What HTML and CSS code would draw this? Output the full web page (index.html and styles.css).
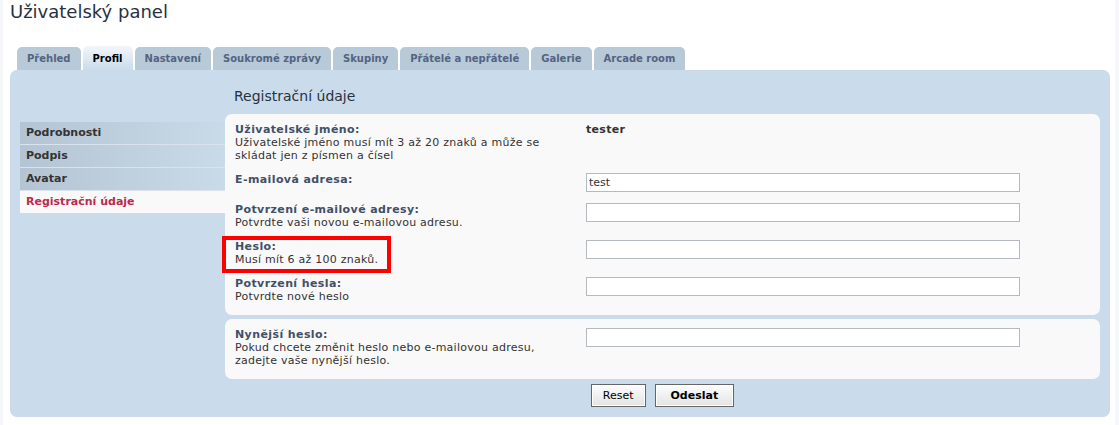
FILE: index.html
```html
<!DOCTYPE html>
<html>
  <head>
    <meta charset="utf-8">
    <title>Uživatelský panel</title>
    <link rel="stylesheet" href="styles.css">
  </head>
  <body>
    <div class="wrap">
      <h1 class="page-title">Uživatelský panel</h1>

      <ul class="tabs">
        <li><a href="#">Přehled</a></li>
        <li class="active"><a href="#">Profil</a></li>
        <li><a href="#">Nastavení</a></li>
        <li><a href="#">Soukromé zprávy</a></li>
        <li><a href="#">Skupiny</a></li>
        <li><a href="#">Přátelé a nepřátelé</a></li>
        <li><a href="#">Galerie</a></li>
        <li><a href="#">Arcade room</a></li>
      </ul>

      <div class="cp">
        <ul class="cp-menu">
          <li><a href="#">Podrobnosti</a></li>
          <li><a href="#">Podpis</a></li>
          <li><a href="#">Avatar</a></li>
          <li class="active"><a href="#">Registrační údaje</a></li>
        </ul>

        <div class="cp-main">
          <h2>Registrační údaje</h2>

          <div class="box">
            <dl class="row">
              <dt>
                <label>Uživatelské jméno:</label>
                <span class="explain">Uživatelské jméno musí mít 3 až 20 znaků a může se skládat jen z písmen a čísel</span>
              </dt>
              <dd><strong>tester</strong></dd>
            </dl>
            <dl class="row">
              <dt><label for="email">E-mailová adresa:</label></dt>
              <dd><input type="text" class="text" id="email" value="test"></dd>
            </dl>
            <dl class="row">
              <dt>
                <label for="email_confirm">Potvrzení e-mailové adresy:</label>
                <span class="explain">Potvrdte vaši novou e-mailovou adresu.</span>
              </dt>
              <dd><input type="text" class="text" id="email_confirm"></dd>
            </dl>
            <dl class="row">
              <dt>
                <label for="new_password">Heslo:</label>
                <span class="explain">Musí mít 6 až 100 znaků.</span>
                <span class="highlight"></span>
              </dt>
              <dd><input type="password" class="text" id="new_password"></dd>
            </dl>
            <dl class="row">
              <dt>
                <label for="password_confirm">Potvrzení hesla:</label>
                <span class="explain">Potvrdte nové heslo</span>
              </dt>
              <dd><input type="password" class="text" id="password_confirm"></dd>
            </dl>
          </div>

          <div class="box">
            <dl class="row">
              <dt>
                <label for="cur_password">Nynější heslo:</label>
                <span class="explain">Pokud chcete změnit heslo nebo e-mailovou adresu, zadejte vaše nynější heslo.</span>
              </dt>
              <dd><input type="password" class="text" id="cur_password"></dd>
            </dl>
          </div>

          <div class="buttons">
            <input type="reset" class="button reset" value="Reset">
            <input type="submit" class="button submit" value="Odeslat">
          </div>
        </div>
      </div>
    </div>
  </body>
</html>
```

FILE: styles.css
```css
body {
  margin: 0 4px 0 3px;
  background: #f5f7fa;
  font-family: "DejaVu Sans", Verdana, sans-serif;
  font-size: 11px;
  color: #333;
}

.wrap {
  background: #fff;
  min-height: 100vh;
  box-sizing: border-box;
  padding: 1px 5px 8px 7px;
}

.page-title {
  margin: 0;
  font-size: 18px;
  line-height: 22px;
  font-weight: normal;
  color: #28313f;
}

.tabs {
  list-style: none;
  margin: 23px 0 0 7px;
  padding: 0;
  display: flex;
  align-items: flex-end;
  gap: 2px;
}

.tabs a {
  display: block;
  height: 23px;
  line-height: 23px;
  padding: 0 10px;
  background: #b8c9d8;
  color: #536482;
  font-size: 10px;
  font-weight: bold;
  text-decoration: none;
  border-radius: 5px 5px 0 0;
}

.tabs .active a {
  height: 24px;
  line-height: 25px;
  background: linear-gradient(#f2f6fa, #cadceb);
  color: #000;
}

.cp {
  display: flex;
  background: #cadceb;
  border-radius: 7px;
  padding: 17px 10px 10px;
}

.cp-menu {
  list-style: none;
  width: 205px;
  flex-shrink: 0;
  margin: 35px 0 0;
  padding: 0;
}

.cp-menu a {
  display: block;
  height: 22px;
  line-height: 22px;
  padding-left: 6px;
  font-weight: bold;
  color: #333;
  text-decoration: none;
  background: linear-gradient(to right, #b4c4d3, #c9dae9);
  border-bottom: 1px solid #d8e3ed;
}

.cp-menu .active a {
  background: #f9f9f9;
  color: #bc2a4d;
  border-bottom: 0;
}

.cp-main {
  flex: 1;
}

.cp-main h2 {
  margin: 0 0 9px 9px;
  font-size: 14px;
  line-height: 18px;
  font-weight: normal;
  color: #28313f;
}

.box {
  background: #f9f9f9;
  border-radius: 7px;
  padding: 4px 10px 6px;
}

.box + .box {
  margin-top: 4px;
}

.row {
  display: grid;
  grid-template-columns: 351px 1fr;
  margin: 0;
  padding: 5px 0 6px;
}

.row dt {
  position: relative;
  padding-right: 22px;
}

.row dt label {
  display: block;
  line-height: 13px;
  font-weight: bold;
  letter-spacing: 0.4px;
  color: #425067;
}

.row .explain {
  display: block;
  line-height: 13px;
  letter-spacing: 0.25px;
  color: #333;
}

.row dd {
  margin: 0;
  line-height: 13px;
}

.row dd strong {
  color: #333;
  letter-spacing: 0.3px;
}

.text {
  display: block;
  width: 434px;
  height: 19px;
  box-sizing: border-box;
  margin: 0;
  padding: 0 2px;
  border: 1px solid #b4bac0;
  background: #fff;
  font-family: "DejaVu Sans", Verdana, sans-serif;
  font-size: 11px;
  color: #333;
}

.highlight {
  position: absolute;
  left: -13px;
  top: -4px;
  width: 169px;
  height: 37px;
  box-sizing: border-box;
  border: 4px solid #f00;
  pointer-events: none;
}

.buttons {
  display: flex;
  justify-content: center;
  gap: 9px;
  margin-top: 5px;
}

.button {
  height: 23px;
  margin: 0;
  border: 1px solid #666;
  box-shadow: inset 0 0 0 1px #fff;
  background: linear-gradient(#fdfdfd, #e3e3e3);
  font-family: "DejaVu Sans", Verdana, sans-serif;
  font-size: 11px;
  color: #000;
  cursor: pointer;
}

.reset {
  padding: 0 11px;
}

.submit {
  padding: 0 15px;
  font-weight: bold;
}
```
